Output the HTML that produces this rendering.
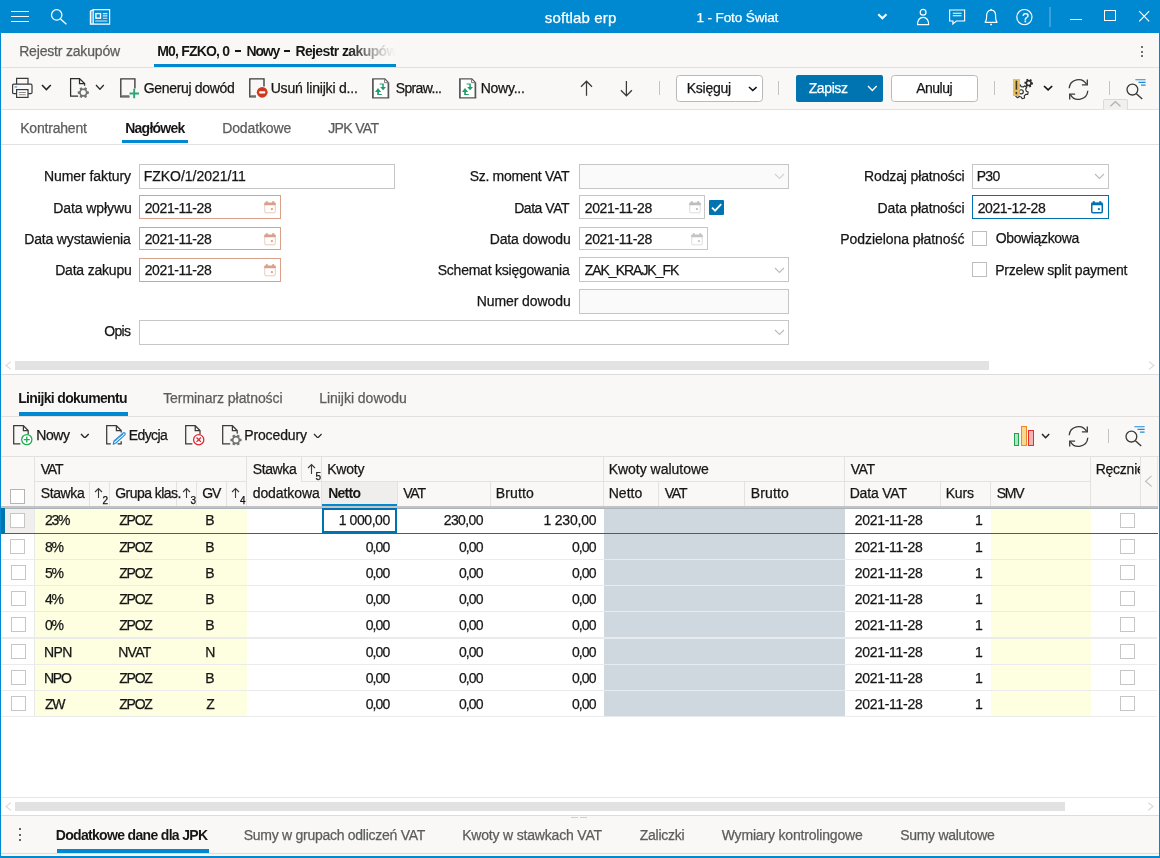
<!DOCTYPE html>
<html lang="pl"><head><meta charset="utf-8"><title>softlab erp</title>
<style>
html,body{margin:0;padding:0;background:#fff;}
body{width:1160px;height:858px;overflow:hidden;font-family:"Liberation Sans", sans-serif;}
#app{position:relative;width:1160px;height:858px;overflow:hidden;background:#fff;font-family:"Liberation Sans", sans-serif;font-size:14px;}
.a{position:absolute;display:block;}
.t{white-space:nowrap;}
#bg,#fg{position:absolute;left:0;top:0;width:1160px;height:858px;}
#fg{will-change:transform;}
</style></head><body><div id="app">
<div id="bg">
<div class="a" style="left:0px;top:0px;width:1160px;height:33.4px;background:#0089d0;"></div>
<div class="a" style="left:1px;top:33px;width:1158px;height:77px;background:#f9f8f7;"></div>
<div class="a" style="left:1px;top:67px;width:1158px;height:1px;background:#e3e1df;"></div>
<div class="a" style="left:1px;top:109px;width:1158px;height:1px;background:#e3e1df;"></div>
<div class="a" style="left:1px;top:144px;width:1158px;height:1px;background:#e3e1df;"></div>
<div class="a" style="left:11px;top:11px;width:18px;height:1.2px;background:#fff;"></div>
<div class="a" style="left:11px;top:16px;width:18px;height:1.2px;background:#fff;"></div>
<div class="a" style="left:11px;top:21px;width:18px;height:1.2px;background:#fff;"></div>
<svg class="a" style="left:49px;top:7px;" width="20" height="20" viewBox="0 0 20 20" fill="none"><circle cx="7.7" cy="7.9" r="5.2" stroke="#fff" stroke-width="1.25"/><path d="M11.5 11.9 L17.4 17.3" stroke="#fff" stroke-width="1.3"/></svg>
<svg class="a" style="left:89px;top:8px;" width="23" height="18" viewBox="0 0 23 18" fill="none"><path d="M4.2 1.7 H20.6 V16.2 H1.4 V3.2 L4.2 1.7 V16.2" stroke="#fff" stroke-width="1.2"/><path d="M2.8 3 V16" stroke="#fff" stroke-width="0.9" stroke-opacity=".7"/><rect x="6.9" y="5.6" width="4.6" height="4.6" stroke="#fff" stroke-width="1.4"/><path d="M13.8 5.6 H18.4 M13.8 7.9 H18.4 M13.8 10.2 H18.4 M6.2 13 H18.4" stroke="#fff" stroke-width="1.1" stroke-opacity=".85"/></svg>
<svg class="a" style="left:876px;top:12px;" width="13" height="9" viewBox="0 0 13 9" fill="none"><path d="M2.3 2.2 L6.4 6.3 L10.5 2.2" stroke="#fff" stroke-width="2"/></svg>
<svg class="a" style="left:915px;top:7px;" width="16" height="20" viewBox="0 0 16 20" fill="none"><circle cx="8.1" cy="5.3" r="2.9" stroke="#fff" stroke-width="1.2"/><path d="M2.5 17.6 C2.7 12.8 5 10.4 8.1 10.4 C11.2 10.4 13.5 12.8 13.7 17.6 Z" stroke="#fff" stroke-width="1.2" stroke-linejoin="round"/></svg>
<svg class="a" style="left:947px;top:7px;" width="20" height="20" viewBox="0 0 20 20" fill="none"><path d="M2.6 3 H17.6 V14 H9.3 L5.9 17 V14 H2.6 Z" stroke="#fff" stroke-width="1.2" stroke-linejoin="miter"/><path d="M5.8 6.2 H14.5 M5.8 8.7 H14.5" stroke="#fff" stroke-width="1.1"/></svg>
<svg class="a" style="left:983px;top:7px;" width="16" height="20" viewBox="0 0 16 20" fill="none"><path d="M2.3 15.4 H13.9 V14.7 C12.5 13.6 12.6 12 12.6 8.6 C12.6 5 10.6 3.2 8.1 3.2 C5.6 3.2 3.6 5 3.6 8.6 C3.6 12 3.7 13.6 2.3 14.7 Z" stroke="#fff" stroke-width="1.2" stroke-linejoin="round"/><path d="M7.2 17.5 H9" stroke="#fff" stroke-width="1.3"/><circle cx="8.1" cy="2.5" r="0.8" fill="#fff"/></svg>
<svg class="a" style="left:1014px;top:7px;" width="21" height="21" viewBox="0 0 21 21" fill="none"><circle cx="10.4" cy="10.1" r="7.6" stroke="#fff" stroke-width="1.15"/></svg>
<div class="a" style="left:1049px;top:7px;width:2px;height:20px;background:#3aa0db;"></div>
<div class="a" style="left:1070px;top:18.7px;width:12px;height:1.2px;background:#fff;"></div>
<div class="a" style="left:1104px;top:10px;width:12px;height:11.2px;border:1.3px solid #fff;box-sizing:border-box;"></div>
<svg class="a" style="left:1137px;top:9px;" width="14" height="14" viewBox="0 0 14 14" fill="none"><path d="M2.2 2.2 L12.2 12.3 M12.2 2.2 L2.2 12.3" stroke="#fff" stroke-width="1.15"/></svg>
<div class="a" style="left:234.5px;top:50.4px;width:6px;height:1.6px;background:#161616;"></div>
<div class="a" style="left:283.8px;top:50.4px;width:6px;height:1.6px;background:#161616;"></div>
<div class="a" style="left:154px;top:64px;width:242px;height:3px;background:#0089d0;"></div>
<div class="a" style="left:659px;top:81px;width:1px;height:14px;background:#c4c4c4;"></div>
<div class="a" style="left:676px;top:75px;width:86.5px;height:27px;background:#fff;border:1px solid #b9b9b9;box-sizing:border-box;border-radius:3.5px;"></div>
<div class="a" style="left:778px;top:81px;width:1px;height:14px;background:#c4c4c4;"></div>
<div class="a" style="left:796px;top:75px;width:87px;height:27px;background:#0073b1;border-radius:2px;"></div>
<div class="a" style="left:891px;top:75px;width:87px;height:27px;background:#fff;border:1px solid #b9b9b9;box-sizing:border-box;border-radius:3.5px;"></div>
<div class="a" style="left:994px;top:81px;width:1px;height:14px;background:#c4c4c4;"></div>
<div class="a" style="left:1109px;top:81px;width:1px;height:14px;background:#c4c4c4;"></div>
<div class="a" style="left:1102.5px;top:99px;width:25px;height:11px;background:#f1f0ef;border:1px solid #dcdad8;box-sizing:border-box;border-radius:2px;border-bottom:none;"></div>
<svg class="a" style="left:11px;top:77px;" width="22" height="22" viewBox="0 0 22 22" fill="none"><path d="M5.6 7.2 V1.4 H17 V7.2" stroke="#3a3a3a" stroke-width="1.2"/><path d="M5.6 16.6 H2.8 Q1.6 16.6 1.6 15.4 V8.4 Q1.6 7.2 2.8 7.2 H19.8 Q21 7.2 21 8.4 V15.4 Q21 16.6 19.8 16.6 H17" stroke="#3a3a3a" stroke-width="1.2"/><rect x="5.6" y="12.6" width="11.4" height="7.8" stroke="#3a3a3a" stroke-width="1.2" fill="#fff"/><path d="M7.8 15.5 H14.8 M7.8 17.7 H14.8" stroke="#8a8a8a" stroke-width="1"/><rect x="3.6" y="9.4" width="2.6" height="1.1" fill="#2b8fd8"/></svg>
<svg class="a" style="left:41.2px;top:84.3px;" width="10.8" height="6.6" viewBox="0 0 10.8 6.6" fill="none"><path d="M1 1 L5.4 5.6 L9.8 1" stroke="#222" stroke-width="1.5" stroke-linejoin="miter"/></svg>
<svg class="a" style="left:69px;top:77px;" width="24" height="24" viewBox="0 0 24 24" fill="none"><path d="M9.1 19.2 H1.6 V1.5 H10.5 L15.6 6.6 V8.7 M10.5 1.5 V6.6 H15.6" stroke="#2b2b2b" stroke-width="1.25"/><path d="M18.30 14.25 L19.89 14.47 L19.89 16.73 L18.30 16.95 L17.46 18.39 L18.07 19.88 L16.12 21.00 L15.13 19.73 L13.47 19.73 L12.48 21.00 L10.53 19.88 L11.14 18.39 L10.30 16.95 L8.71 16.73 L8.71 14.47 L10.30 14.25 L11.14 12.81 L10.53 11.32 L12.48 10.20 L13.47 11.47 L15.13 11.47 L16.12 10.20 L18.07 11.32 L17.46 12.81 Z" fill="#6f7472"/><circle cx="14.3" cy="15.6" r="2.50" fill="#faf9f8"/></svg>
<svg class="a" style="left:95.1px;top:84.2px;" width="9.8" height="6.3" viewBox="0 0 9.8 6.3" fill="none"><path d="M1 1 L4.9 5.3 L8.8 1" stroke="#2b2b2b" stroke-width="1.3" stroke-linejoin="miter"/></svg>
<svg class="a" style="left:119.6px;top:77.6px;" width="21" height="22" viewBox="0 0 21 22" fill="none"><path d="M9.6 18.9 H0.8 V0.8 H14.9 V10.6" stroke="#3a3a3a" stroke-width="1.35"/><path d="M0.8 17.6 H9.4" stroke="#8a8a8a" stroke-width="1.1"/><path d="M14.2 10.7 V20.2 M9.5 15.5 H19" stroke="#2aa775" stroke-width="1.9"/></svg>
<svg class="a" style="left:249.1px;top:77.6px;" width="20" height="22" viewBox="0 0 20 22" fill="none"><path d="M7 18.9 H0.8 V0.8 H15 V8.6" stroke="#3a3a3a" stroke-width="1.35"/><path d="M0.8 17.6 H7" stroke="#8a8a8a" stroke-width="1.1"/><circle cx="13.2" cy="14.3" r="5.4" fill="#cf3a1f"/><rect x="10.2" y="13.2" width="6" height="2.2" rx="0.6" fill="#fff"/></svg>
<svg class="a" style="left:372px;top:78px;" width="19" height="22" viewBox="0 0 19 22" fill="none"><path d="M0.9 0.7 H12.6 L16.6 4.7 V20 H0.9 Z" fill="#fff"/><path d="M0.9 1 V20 M16.4 4.6 V20" stroke="#555" stroke-width="1.7"/><path d="M0.1 0.8 H12.8 L16.6 4.6 M0.1 19.9 H17.2" stroke="#555" stroke-width="1.2"/><path d="M12.6 0.8 V4.7 H16.4" stroke="#777" stroke-width="1"/><path d="M7.6 5.6 H11.8 V9 H14 L11.1 12.2 L8.1 9 H10.3 V6.5 H7.6 Z" fill="#1f9e6a"/><path d="M6 10 L9.1 13.9 H6.9 V16 H9.8 V16.9 H5.2 V13.9 H3 Z" fill="#1f9e6a"/></svg>
<svg class="a" style="left:458.7px;top:78px;" width="19" height="22" viewBox="0 0 19 22" fill="none"><path d="M0.9 0.7 H12.6 L16.6 4.7 V20 H0.9 Z" fill="#fff"/><path d="M0.9 1 V20 M16.4 4.6 V20" stroke="#555" stroke-width="1.7"/><path d="M0.1 0.8 H12.8 L16.6 4.6 M0.1 19.9 H17.2" stroke="#555" stroke-width="1.2"/><path d="M12.6 0.8 V4.7 H16.4" stroke="#777" stroke-width="1"/><path d="M7.6 5.6 H11.8 V9 H14 L11.1 12.2 L8.1 9 H10.3 V6.5 H7.6 Z" fill="#1f9e6a"/><path d="M6 10 L9.1 13.9 H6.9 V16 H9.8 V16.9 H5.2 V13.9 H3 Z" fill="#1f9e6a"/></svg>
<svg class="a" style="left:579px;top:79px;" width="15" height="19" viewBox="0 0 15 19" fill="none"><path d="M7.5 16.8 V2.2 M2 7.8 L7.5 2.2 L13 7.8" stroke="#3a3a3a" stroke-width="1.25"/></svg>
<svg class="a" style="left:619px;top:79px;" width="15" height="19" viewBox="0 0 15 19" fill="none"><path d="M7.4 2.1 V16.7 M1.9 11.2 L7.4 16.8 L12.9 11.2" stroke="#3a3a3a" stroke-width="1.25"/></svg>
<svg class="a" style="left:747.5px;top:86px;" width="9.6" height="5.5" viewBox="0 0 9.6 5.5" fill="none"><path d="M1 1 L4.8 4.5 L8.6 1" stroke="#111" stroke-width="1.6" stroke-linejoin="miter"/></svg>
<svg class="a" style="left:867px;top:85.4px;" width="10.7" height="6.5" viewBox="0 0 10.7 6.5" fill="none"><path d="M1 1 L5.35 5.5 L9.7 1" stroke="#fff" stroke-width="1.4" stroke-linejoin="miter"/></svg>
<svg class="a" style="left:1011px;top:76px;" width="26" height="26" viewBox="0 0 26 26" fill="none"><path d="M15.35 15.21 L17.20 15.95 L16.71 18.38 L14.71 18.35 L13.28 19.96 L13.57 21.94 L11.22 22.73 L10.25 20.98 L8.14 20.55 L6.57 21.78 L4.71 20.14 L5.74 18.43 L5.05 16.39 L3.20 15.65 L3.69 13.22 L5.69 13.25 L7.12 11.64 L6.83 9.66 L9.18 8.87 L10.15 10.62 L12.26 11.05 L13.83 9.82 L15.69 11.46 L14.66 13.17 Z" fill="#fbfaf9" stroke="#2e2e2e" stroke-width="1.15" stroke-linejoin="round"/><circle cx="10.2" cy="15.8" r="2.1" stroke="#2e2e2e" stroke-width="1.15"/><path d="M20.87 6.37 L22.08 6.67 L21.90 8.40 L20.67 8.44 L19.92 9.49 L20.27 10.67 L18.68 11.39 L18.02 10.34 L16.74 10.21 L15.89 11.11 L14.48 10.09 L15.05 9.00 L14.53 7.83 L13.32 7.53 L13.50 5.80 L14.73 5.76 L15.48 4.71 L15.13 3.53 L16.72 2.81 L17.38 3.86 L18.66 3.99 L19.51 3.09 L20.92 4.11 L20.35 5.20 Z" fill="#2e2e2e"/><circle cx="17.7" cy="7.1" r="1.55" fill="#faf9f8"/><rect x="1.95" y="3" width="6.95" height="17" fill="#e6bd5c" fill-opacity=".95"/><rect x="4.6" y="4.7" width="1.6" height="9" fill="#3a382f"/><rect x="4.6" y="15.9" width="1.6" height="2.3" fill="#3a382f"/></svg>
<svg class="a" style="left:1042.5px;top:85.4px;" width="10.2" height="5.9" viewBox="0 0 10.2 5.9" fill="none"><path d="M1 1 L5.1 4.9 L9.2 1" stroke="#111" stroke-width="1.6" stroke-linejoin="miter"/></svg>
<svg class="a" style="left:1067.4px;top:77.6px;" width="23" height="23" viewBox="0 0 23 23" fill="none"><path d="M2.2 10.2 A9.3 9.3 0 0 1 19.6 6.4" stroke="#3a3a3a" stroke-width="1.3"/><path d="M20.8 12.8 A9.3 9.3 0 0 1 3.4 16.6" stroke="#3a3a3a" stroke-width="1.3"/><path d="M20.3 1.4 V6.8 H14.9" stroke="#3a3a3a" stroke-width="1.3"/><path d="M2.7 21.6 V16.2 H8.1" stroke="#3a3a3a" stroke-width="1.3"/></svg>
<svg class="a" style="left:1125.4px;top:77.6px;" width="22" height="22" viewBox="0 0 22 22" fill="none"><circle cx="7.4" cy="11.6" r="5.4" stroke="#3a3a3a" stroke-width="1.3"/><path d="M11.4 15.7 L17.2 21" stroke="#3a3a3a" stroke-width="1.4"/><path d="M10.4 1.7 H20.6 M13.5 4.4 H20.6 M16 7.1 H20.6" stroke="#1c8ad6" stroke-width="1.15"/></svg>
<svg class="a" style="left:1109px;top:100px;" width="13" height="8" viewBox="0 0 13 8" fill="none"><path d="M1.4 6.2 L6.4 1.7 L11.4 6.2" stroke="#b3b3b3" stroke-width="1.3"/></svg>
<div class="a" style="left:1140.6px;top:46.0px;width:2px;height:2px;background:#444;border-radius:1px;"></div>
<div class="a" style="left:1140.6px;top:50.6px;width:2px;height:2px;background:#444;border-radius:1px;"></div>
<div class="a" style="left:1140.6px;top:55.2px;width:2px;height:2px;background:#444;border-radius:1px;"></div>
<div class="a" style="left:122px;top:140.2px;width:66px;height:3px;background:#0089d0;"></div>
<div class="a" style="left:139px;top:164px;width:256px;height:25px;background:#fff;border:1px solid #c6c6c6;box-sizing:border-box;"></div>
<div class="a" style="left:139px;top:195px;width:142px;height:24px;background:#fff;border:1px solid #d9a08a;box-sizing:border-box;"></div>
<svg class="a" style="left:264px;top:201px;" width="12" height="13" viewBox="0 0 12 13" fill="none"><rect x="1.8" y="0.2" width="2" height="2.4" fill="#d9a08a"/><rect x="8.2" y="0.2" width="2" height="2.4" fill="#d9a08a"/><rect x="0.2" y="1.6" width="11.6" height="2.7" rx="0.8" fill="#d9a08a"/><rect x="0.75" y="2.6" width="10.5" height="9.2" rx="1" stroke="#d9a08a" stroke-width="1" stroke-opacity=".55"/><circle cx="7.9" cy="8.1" r="1.15" fill="#d9a08a"/></svg>
<div class="a" style="left:139px;top:227px;width:142px;height:23px;background:#fff;border:1px solid #d9a08a;box-sizing:border-box;"></div>
<svg class="a" style="left:264px;top:233px;" width="12" height="13" viewBox="0 0 12 13" fill="none"><rect x="1.8" y="0.2" width="2" height="2.4" fill="#d9a08a"/><rect x="8.2" y="0.2" width="2" height="2.4" fill="#d9a08a"/><rect x="0.2" y="1.6" width="11.6" height="2.7" rx="0.8" fill="#d9a08a"/><rect x="0.75" y="2.6" width="10.5" height="9.2" rx="1" stroke="#d9a08a" stroke-width="1" stroke-opacity=".55"/><circle cx="7.9" cy="8.1" r="1.15" fill="#d9a08a"/></svg>
<div class="a" style="left:139px;top:258px;width:142px;height:24px;background:#fff;border:1px solid #d9a08a;box-sizing:border-box;"></div>
<svg class="a" style="left:264px;top:264px;" width="12" height="13" viewBox="0 0 12 13" fill="none"><rect x="1.8" y="0.2" width="2" height="2.4" fill="#d9a08a"/><rect x="8.2" y="0.2" width="2" height="2.4" fill="#d9a08a"/><rect x="0.2" y="1.6" width="11.6" height="2.7" rx="0.8" fill="#d9a08a"/><rect x="0.75" y="2.6" width="10.5" height="9.2" rx="1" stroke="#d9a08a" stroke-width="1" stroke-opacity=".55"/><circle cx="7.9" cy="8.1" r="1.15" fill="#d9a08a"/></svg>
<div class="a" style="left:139px;top:320px;width:650px;height:25px;background:#fff;border:1px solid #c6c6c6;box-sizing:border-box;"></div>
<svg class="a" style="left:774px;top:329.2px;" width="11" height="6.4" viewBox="0 0 11 6.4" fill="none"><path d="M1 1 L5.5 5.4 L10 1" stroke="#bcbcbc" stroke-width="1.15" stroke-linejoin="miter"/></svg>
<div class="a" style="left:579px;top:164px;width:210px;height:25px;background:#fafafa;border:1px solid #c6c6c6;box-sizing:border-box;"></div>
<svg class="a" style="left:774px;top:173.2px;" width="11" height="6.4" viewBox="0 0 11 6.4" fill="none"><path d="M1 1 L5.5 5.4 L10 1" stroke="#d2d2d2" stroke-width="1.15" stroke-linejoin="miter"/></svg>
<div class="a" style="left:579px;top:195px;width:126px;height:24px;background:#fff;border:1px solid #c6c6c6;box-sizing:border-box;"></div>
<svg class="a" style="left:689px;top:201px;" width="12" height="13" viewBox="0 0 12 13" fill="none"><rect x="1.8" y="0.2" width="2" height="2.4" fill="#bdbdbd"/><rect x="8.2" y="0.2" width="2" height="2.4" fill="#bdbdbd"/><rect x="0.2" y="1.6" width="11.6" height="2.7" rx="0.8" fill="#bdbdbd"/><rect x="0.75" y="2.6" width="10.5" height="9.2" rx="1" stroke="#bdbdbd" stroke-width="1" stroke-opacity=".55"/><circle cx="7.9" cy="8.1" r="1.15" fill="#bdbdbd"/></svg>
<div class="a" style="left:709px;top:200px;width:15px;height:15px;background:#0073b1;border-radius:1px;"></div>
<svg class="a" style="left:709px;top:200px;" width="15" height="15" viewBox="0 0 15 15" fill="none"><path d="M3 7.6 L6.1 10.7 L12.2 4.2" stroke="#fff" stroke-width="1.7"/></svg>
<div class="a" style="left:579px;top:227px;width:129px;height:23px;background:#fff;border:1px solid #c6c6c6;box-sizing:border-box;"></div>
<svg class="a" style="left:691px;top:233px;" width="12" height="13" viewBox="0 0 12 13" fill="none"><rect x="1.8" y="0.2" width="2" height="2.4" fill="#c4c4c4"/><rect x="8.2" y="0.2" width="2" height="2.4" fill="#c4c4c4"/><rect x="0.2" y="1.6" width="11.6" height="2.7" rx="0.8" fill="#c4c4c4"/><rect x="0.75" y="2.6" width="10.5" height="9.2" rx="1" stroke="#c4c4c4" stroke-width="1" stroke-opacity=".55"/><circle cx="7.9" cy="8.1" r="1.15" fill="#c4c4c4"/></svg>
<div class="a" style="left:579px;top:257px;width:210px;height:25px;background:#fff;border:1px solid #c6c6c6;box-sizing:border-box;"></div>
<svg class="a" style="left:774px;top:267.2px;" width="11" height="6.4" viewBox="0 0 11 6.4" fill="none"><path d="M1 1 L5.5 5.4 L10 1" stroke="#bcbcbc" stroke-width="1.15" stroke-linejoin="miter"/></svg>
<div class="a" style="left:579px;top:289px;width:210px;height:25px;background:#fafafa;border:1px solid #c6c6c6;box-sizing:border-box;"></div>
<div class="a" style="left:972px;top:164px;width:137px;height:25px;background:#fff;border:1px solid #c6c6c6;box-sizing:border-box;"></div>
<svg class="a" style="left:1093.5px;top:173.2px;" width="11" height="6.4" viewBox="0 0 11 6.4" fill="none"><path d="M1 1 L5.5 5.4 L10 1" stroke="#bcbcbc" stroke-width="1.15" stroke-linejoin="miter"/></svg>
<div class="a" style="left:972px;top:195px;width:137px;height:24px;background:#fff;border:1.3px solid #0072b0;box-sizing:border-box;"></div>
<svg class="a" style="left:1091px;top:201px;" width="12" height="13" viewBox="0 0 12 13" fill="none"><rect x="1.8" y="0.2" width="2" height="2.4" fill="#0072b0"/><rect x="8.2" y="0.2" width="2" height="2.4" fill="#0072b0"/><rect x="0.2" y="1.6" width="11.6" height="2.7" rx="0.8" fill="#0072b0"/><rect x="0.75" y="2.6" width="10.5" height="9.2" rx="1" stroke="#0072b0" stroke-width="1.5" stroke-opacity="1"/><circle cx="7.9" cy="8.1" r="1.15" fill="#0072b0"/></svg>
<div class="a" style="left:972px;top:231px;width:15px;height:15px;background:#fff;border:1px solid #bdbdbd;box-sizing:border-box;"></div>
<div class="a" style="left:972px;top:262px;width:15px;height:15px;background:#fff;border:1px solid #bdbdbd;box-sizing:border-box;"></div>
<div class="a" style="left:15px;top:361px;width:974px;height:9px;background:#e2e2e2;"></div>
<svg class="a" style="left:4px;top:359px;" width="8" height="13" viewBox="0 0 8 13" fill="none"><path d="M6.9 2.6 L2 6.5 L6.9 10.4" stroke="#d9d9d9" stroke-width="1.15"/></svg>
<svg class="a" style="left:1148px;top:359px;" width="8" height="13" viewBox="0 0 8 13" fill="none"><path d="M1.1 2.6 L6 6.5 L1.1 10.4" stroke="#d9d9d9" stroke-width="1.15"/></svg>
<div class="a" style="left:1px;top:374.4px;width:1158px;height:134.6px;background:#f9f8f7;"></div>
<div class="a" style="left:1px;top:373.6px;width:1158px;height:1px;background:#dedcda;"></div>
<div class="a" style="left:1px;top:416px;width:1158px;height:1px;background:#e3e1df;"></div>
<div class="a" style="left:19px;top:412px;width:109px;height:3.8px;background:#0089d0;"></div>
<div class="a" style="left:1px;top:456px;width:1158px;height:1px;background:#e3e1df;"></div>
<div class="a" style="left:1107.7px;top:429px;width:1px;height:14px;background:#c4c4c4;"></div>
<svg class="a" style="left:12.6px;top:424.7px;" width="22" height="22" viewBox="0 0 22 22" fill="none"><path d="M7.4 18.9 H0.7 V0.7 H10.399999999999999 L15.2 5.5 V9.4 M10.399999999999999 0.7 V5.5 H15.2" stroke="#3a3a3a" stroke-width="1.25" stroke-linejoin="miter"/><circle cx="13.8" cy="14.6" r="5.1" fill="#fff" stroke="#1faa53" stroke-width="1.25"/><path d="M13.8 11.6 V17.6 M10.8 14.6 H16.8" stroke="#1faa53" stroke-width="1.3"/></svg>
<svg class="a" style="left:79.6px;top:432.6px;" width="9.7" height="5.9" viewBox="0 0 9.7 5.9" fill="none"><path d="M1 1 L4.85 4.9 L8.7 1" stroke="#222" stroke-width="1.4" stroke-linejoin="miter"/></svg>
<svg class="a" style="left:105.8px;top:424.7px;" width="22" height="22" viewBox="0 0 22 22" fill="none"><path d="M4.8 18.9 H0.7 V0.7 H10.4 L15.2 5.5 V7.6 M10.4 0.7 V5.5 H15.2 M11.6 18.9 H15.2 V16.2" stroke="#3a3a3a" stroke-width="1.25"/><path d="M7.3 19.2 L8 16 L17.2 7.9 Q18.2 7.2 19 8.2 Q19.6 9.2 18.8 9.9 L9.9 18 Z" fill="#fff" stroke="#2b8fd8" stroke-width="1.2" stroke-linejoin="round"/><path d="M8.7 16.4 L17.6 8.6" stroke="#2b8fd8" stroke-width="1"/></svg>
<svg class="a" style="left:184.6px;top:424.7px;" width="22" height="22" viewBox="0 0 22 22" fill="none"><path d="M7.4 18.9 H0.7 V0.7 H10.2 L15.0 5.5 V9.4 M10.2 0.7 V5.5 H15.0" stroke="#3a3a3a" stroke-width="1.25" stroke-linejoin="miter"/><circle cx="13.7" cy="14.7" r="5.1" fill="#fff" stroke="#e0262e" stroke-width="1.3"/><path d="M11.5 12.5 L15.9 16.9 M15.9 12.5 L11.5 16.9" stroke="#e0262e" stroke-width="1.3"/></svg>
<svg class="a" style="left:221.5px;top:424.7px;" width="22" height="22" viewBox="0 0 22 22" fill="none"><path d="M8.2 18.9 H0.7 V0.7 H10.399999999999999 L15.2 5.5 V8.8 M10.399999999999999 0.7 V5.5 H15.2" stroke="#3a3a3a" stroke-width="1.25" stroke-linejoin="miter"/><path d="M18.00 13.65 L19.59 13.87 L19.59 16.13 L18.00 16.35 L17.16 17.79 L17.77 19.28 L15.82 20.40 L14.83 19.13 L13.17 19.13 L12.18 20.40 L10.23 19.28 L10.84 17.79 L10.00 16.35 L8.41 16.13 L8.41 13.87 L10.00 13.65 L10.84 12.21 L10.23 10.72 L12.18 9.60 L13.17 10.87 L14.83 10.87 L15.82 9.60 L17.77 10.72 L17.16 12.21 Z" fill="#6f7472"/><circle cx="14" cy="15" r="2.50" fill="#faf9f8"/></svg>
<svg class="a" style="left:312.8px;top:432.6px;" width="9.6" height="5.9" viewBox="0 0 9.6 5.9" fill="none"><path d="M1 1 L4.8 4.9 L8.6 1" stroke="#2b2b2b" stroke-width="1.3" stroke-linejoin="miter"/></svg>
<div class="a" style="left:1013.7px;top:433px;width:5.8px;height:12.8px;background:#b9e0c0;border:1.4px solid #1ea44c;box-sizing:border-box;"></div>
<div class="a" style="left:1021px;top:426px;width:5.8px;height:19.8px;background:#f9d88e;border:1.4px solid #ee8a2a;box-sizing:border-box;"></div>
<div class="a" style="left:1028.2px;top:430px;width:5.7px;height:15.8px;background:#f5b5b5;border:1.4px solid #e22f2f;box-sizing:border-box;"></div>
<svg class="a" style="left:1040.5px;top:433.2px;" width="9.2" height="5.7" viewBox="0 0 9.2 5.7" fill="none"><path d="M1 1 L4.6 4.7 L8.2 1" stroke="#222" stroke-width="1.5" stroke-linejoin="miter"/></svg>
<svg class="a" style="left:1066.9px;top:424.7px;" width="23" height="23" viewBox="0 0 23 23" fill="none"><path d="M2.2 10.2 A9.3 9.3 0 0 1 19.6 6.4" stroke="#3a3a3a" stroke-width="1.3"/><path d="M20.8 12.8 A9.3 9.3 0 0 1 3.4 16.6" stroke="#3a3a3a" stroke-width="1.3"/><path d="M20.3 1.4 V6.8 H14.9" stroke="#3a3a3a" stroke-width="1.3"/><path d="M2.7 21.6 V16.2 H8.1" stroke="#3a3a3a" stroke-width="1.3"/></svg>
<svg class="a" style="left:1123.8px;top:424.6px;" width="22" height="22" viewBox="0 0 22 22" fill="none"><circle cx="7.4" cy="11.6" r="5.4" stroke="#3a3a3a" stroke-width="1.3"/><path d="M11.4 15.7 L17.2 21" stroke="#3a3a3a" stroke-width="1.4"/><path d="M10.4 1.7 H20.6 M13.5 4.4 H20.6 M16 7.1 H20.6" stroke="#1c8ad6" stroke-width="1.15"/></svg>
<div class="a" style="left:322px;top:482px;width:75px;height:24px;background:#efeeed;"></div>
<div class="a" style="left:322px;top:504px;width:75px;height:2px;background:#0089d0;"></div>
<div class="a" style="left:35px;top:481px;width:211px;height:1px;background:#e4e2e0;"></div>
<div class="a" style="left:322px;top:481px;width:768px;height:1px;background:#e4e2e0;"></div>
<div class="a" style="left:34px;top:457px;width:1px;height:49px;background:#e4e2e0;"></div>
<div class="a" style="left:246px;top:457px;width:1px;height:49px;background:#e4e2e0;"></div>
<div class="a" style="left:321px;top:457px;width:1px;height:49px;background:#e4e2e0;"></div>
<div class="a" style="left:603px;top:457px;width:1px;height:49px;background:#e4e2e0;"></div>
<div class="a" style="left:844px;top:457px;width:1px;height:49px;background:#e4e2e0;"></div>
<div class="a" style="left:1090px;top:457px;width:1px;height:49px;background:#e4e2e0;"></div>
<div class="a" style="left:1140px;top:457px;width:1px;height:49px;background:#e4e2e0;"></div>
<div class="a" style="left:89px;top:482px;width:1px;height:24px;background:#e4e2e0;"></div>
<div class="a" style="left:109px;top:482px;width:1px;height:24px;background:#e4e2e0;"></div>
<div class="a" style="left:176px;top:482px;width:1px;height:24px;background:#e4e2e0;"></div>
<div class="a" style="left:196px;top:482px;width:1px;height:24px;background:#e4e2e0;"></div>
<div class="a" style="left:226px;top:482px;width:1px;height:24px;background:#e4e2e0;"></div>
<div class="a" style="left:397px;top:482px;width:1px;height:24px;background:#e4e2e0;"></div>
<div class="a" style="left:490px;top:482px;width:1px;height:24px;background:#e4e2e0;"></div>
<div class="a" style="left:658px;top:482px;width:1px;height:24px;background:#e4e2e0;"></div>
<div class="a" style="left:744px;top:482px;width:1px;height:24px;background:#e4e2e0;"></div>
<div class="a" style="left:940px;top:482px;width:1px;height:24px;background:#e4e2e0;"></div>
<div class="a" style="left:990px;top:482px;width:1px;height:24px;background:#e4e2e0;"></div>
<div class="a" style="left:301px;top:457px;width:1px;height:24px;background:#e4e2e0;"></div>
<div class="a" style="left:301px;top:481px;width:20px;height:1px;background:#e4e2e0;"></div>
<div class="a" style="left:10px;top:489px;width:15px;height:15px;background:#fff;border:1px solid #b4b4b4;box-sizing:border-box;"></div>
<svg class="a" style="left:93.5px;top:487px;" width="9" height="12" viewBox="0 0 9 12" fill="none"><path d="M4.5 11 V1.5 M1 5 L4.5 1.5 L8 5" stroke="#3a3a3a" stroke-width="1.1"/></svg>
<svg class="a" style="left:181.5px;top:487px;" width="9" height="12" viewBox="0 0 9 12" fill="none"><path d="M4.5 11 V1.5 M1 5 L4.5 1.5 L8 5" stroke="#3a3a3a" stroke-width="1.1"/></svg>
<svg class="a" style="left:231px;top:487px;" width="9" height="12" viewBox="0 0 9 12" fill="none"><path d="M4.5 11 V1.5 M1 5 L4.5 1.5 L8 5" stroke="#3a3a3a" stroke-width="1.1"/></svg>
<svg class="a" style="left:306.5px;top:462.5px;" width="9" height="12" viewBox="0 0 9 12" fill="none"><path d="M4.5 11 V1.5 M1 5 L4.5 1.5 L8 5" stroke="#3a3a3a" stroke-width="1.1"/></svg>
<svg class="a" style="left:1143px;top:474px;" width="10" height="15" viewBox="0 0 10 15" fill="none"><path d="M8.6 1.9 L2.6 7.2 L8.6 12.5" stroke="#c2c2c2" stroke-width="1.2"/></svg>
<div class="a" style="left:1157px;top:457px;width:1px;height:340px;background:#e8e8e8;"></div>
<div class="a" style="left:1px;top:506px;width:1157px;height:291px;background:#fff;"></div>
<div class="a" style="left:35px;top:509px;width:211.6px;height:24px;background:#fefee0;"></div>
<div class="a" style="left:604px;top:509px;width:241px;height:24px;background:#cfd8df;"></div>
<div class="a" style="left:991px;top:509px;width:100px;height:24px;background:#fefee0;"></div>
<div class="a" style="left:1px;top:508px;width:33px;height:25px;background:#f0efee;"></div>
<div class="a" style="left:10px;top:513px;width:15px;height:15px;background:#fff;border:1px solid #c6c6c6;box-sizing:border-box;"></div>
<div class="a" style="left:1120px;top:513px;width:15px;height:15px;background:#fff;border:1px solid #c6c6c6;box-sizing:border-box;"></div>
<div class="a" style="left:35px;top:534px;width:211.6px;height:25px;background:#fefee0;"></div>
<div class="a" style="left:604px;top:534px;width:241px;height:25px;background:#cfd8df;"></div>
<div class="a" style="left:991px;top:534px;width:100px;height:25px;background:#fefee0;"></div>
<div class="a" style="left:1px;top:559px;width:1156px;height:1px;background:#ebebeb;"></div>
<div class="a" style="left:604px;top:559px;width:241px;height:1px;background:#e6ecf0;"></div>
<div class="a" style="left:10px;top:539px;width:15px;height:15px;background:#fff;border:1px solid #c6c6c6;box-sizing:border-box;"></div>
<div class="a" style="left:1120px;top:539px;width:15px;height:15px;background:#fff;border:1px solid #c6c6c6;box-sizing:border-box;"></div>
<div class="a" style="left:35px;top:560px;width:211.6px;height:25px;background:#fefee0;"></div>
<div class="a" style="left:604px;top:560px;width:241px;height:25px;background:#cfd8df;"></div>
<div class="a" style="left:991px;top:560px;width:100px;height:25px;background:#fefee0;"></div>
<div class="a" style="left:1px;top:585px;width:1156px;height:1px;background:#ebebeb;"></div>
<div class="a" style="left:604px;top:585px;width:241px;height:1px;background:#e6ecf0;"></div>
<div class="a" style="left:11px;top:565px;width:15px;height:15px;background:#fff;border:1px solid #c6c6c6;box-sizing:border-box;"></div>
<div class="a" style="left:1120px;top:565px;width:15px;height:15px;background:#fff;border:1px solid #c6c6c6;box-sizing:border-box;"></div>
<div class="a" style="left:35px;top:586px;width:211.6px;height:25px;background:#fefee0;"></div>
<div class="a" style="left:604px;top:586px;width:241px;height:25px;background:#cfd8df;"></div>
<div class="a" style="left:991px;top:586px;width:100px;height:25px;background:#fefee0;"></div>
<div class="a" style="left:1px;top:611px;width:1156px;height:1px;background:#ebebeb;"></div>
<div class="a" style="left:604px;top:611px;width:241px;height:1px;background:#e6ecf0;"></div>
<div class="a" style="left:11px;top:591px;width:15px;height:15px;background:#fff;border:1px solid #c6c6c6;box-sizing:border-box;"></div>
<div class="a" style="left:1120px;top:591px;width:15px;height:15px;background:#fff;border:1px solid #c6c6c6;box-sizing:border-box;"></div>
<div class="a" style="left:35px;top:612px;width:211.6px;height:25px;background:#fefee0;"></div>
<div class="a" style="left:604px;top:612px;width:241px;height:25px;background:#cfd8df;"></div>
<div class="a" style="left:991px;top:612px;width:100px;height:25px;background:#fefee0;"></div>
<div class="a" style="left:1px;top:637px;width:1156px;height:2px;background:#ebebeb;"></div>
<div class="a" style="left:604px;top:637px;width:241px;height:2px;background:#e6ecf0;"></div>
<div class="a" style="left:11px;top:617px;width:15px;height:15px;background:#fff;border:1px solid #c6c6c6;box-sizing:border-box;"></div>
<div class="a" style="left:1120px;top:617px;width:15px;height:15px;background:#fff;border:1px solid #c6c6c6;box-sizing:border-box;"></div>
<div class="a" style="left:35px;top:639px;width:211.6px;height:25px;background:#fefee0;"></div>
<div class="a" style="left:604px;top:639px;width:241px;height:25px;background:#cfd8df;"></div>
<div class="a" style="left:991px;top:639px;width:100px;height:25px;background:#fefee0;"></div>
<div class="a" style="left:1px;top:664px;width:1156px;height:1px;background:#ebebeb;"></div>
<div class="a" style="left:604px;top:664px;width:241px;height:1px;background:#e6ecf0;"></div>
<div class="a" style="left:11px;top:644px;width:15px;height:15px;background:#fff;border:1px solid #c6c6c6;box-sizing:border-box;"></div>
<div class="a" style="left:1120px;top:644px;width:15px;height:15px;background:#fff;border:1px solid #c6c6c6;box-sizing:border-box;"></div>
<div class="a" style="left:35px;top:665px;width:211.6px;height:25px;background:#fefee0;"></div>
<div class="a" style="left:604px;top:665px;width:241px;height:25px;background:#cfd8df;"></div>
<div class="a" style="left:991px;top:665px;width:100px;height:25px;background:#fefee0;"></div>
<div class="a" style="left:1px;top:690px;width:1156px;height:1px;background:#ebebeb;"></div>
<div class="a" style="left:604px;top:690px;width:241px;height:1px;background:#e6ecf0;"></div>
<div class="a" style="left:11px;top:670px;width:15px;height:15px;background:#fff;border:1px solid #c6c6c6;box-sizing:border-box;"></div>
<div class="a" style="left:1120px;top:670px;width:15px;height:15px;background:#fff;border:1px solid #c6c6c6;box-sizing:border-box;"></div>
<div class="a" style="left:35px;top:691px;width:211.6px;height:25px;background:#fefee0;"></div>
<div class="a" style="left:604px;top:691px;width:241px;height:25px;background:#cfd8df;"></div>
<div class="a" style="left:991px;top:691px;width:100px;height:25px;background:#fefee0;"></div>
<div class="a" style="left:1px;top:716px;width:1156px;height:1px;background:#ebebeb;"></div>
<div class="a" style="left:604px;top:716px;width:241px;height:1px;background:#e6ecf0;"></div>
<div class="a" style="left:11px;top:696px;width:15px;height:15px;background:#fff;border:1px solid #c6c6c6;box-sizing:border-box;"></div>
<div class="a" style="left:1120px;top:696px;width:15px;height:15px;background:#fff;border:1px solid #c6c6c6;box-sizing:border-box;"></div>
<div class="a" style="left:34px;top:508px;width:1px;height:208px;background:#e9e9e9;"></div>
<div class="a" style="left:1px;top:506px;width:1157px;height:2px;background:#c3c3c3;"></div>
<div class="a" style="left:1px;top:508px;width:1157px;height:0.45px;background:#a9b3ba;"></div>
<div class="a" style="left:1px;top:532.5px;width:1157px;height:0.5px;background:#b5b5b5;"></div>
<div class="a" style="left:1px;top:533px;width:1157px;height:1px;background:#555a5e;"></div>
<div class="a" style="left:1px;top:508.3px;width:3.7px;height:24.7px;background:#0073b1;"></div>
<div class="a" style="left:322px;top:508px;width:75px;height:25px;background:#fff;border:2px solid #0072b0;box-sizing:border-box;"></div>
<div class="a" style="left:1px;top:797px;width:1158px;height:1px;background:#e6e6e6;"></div>
<div class="a" style="left:15px;top:802px;width:1050px;height:9px;background:#e2e2e2;"></div>
<svg class="a" style="left:4px;top:800px;" width="8" height="13" viewBox="0 0 8 13" fill="none"><path d="M6.9 2.6 L2 6.5 L6.9 10.4" stroke="#d9d9d9" stroke-width="1.15"/></svg>
<svg class="a" style="left:1147px;top:800px;" width="8" height="13" viewBox="0 0 8 13" fill="none"><path d="M1.1 2.6 L6 6.5 L1.1 10.4" stroke="#d9d9d9" stroke-width="1.15"/></svg>
<div class="a" style="left:1px;top:816px;width:1158px;height:40px;background:#f9f8f7;"></div>
<div class="a" style="left:1px;top:815px;width:1158px;height:1px;background:#dedcda;"></div>
<div class="a" style="left:1px;top:853px;width:1158px;height:1px;background:#dedcda;"></div>
<div class="a" style="left:57px;top:849px;width:152px;height:4px;background:#0089d0;"></div>
<div class="a" style="left:19px;top:828.3px;width:2.1px;height:2.1px;background:#333;border-radius:1.05px;"></div>
<div class="a" style="left:19px;top:833.5999999999999px;width:2.1px;height:2.1px;background:#333;border-radius:1.05px;"></div>
<div class="a" style="left:19px;top:838.9px;width:2.1px;height:2.1px;background:#333;border-radius:1.05px;"></div>
<div class="a" style="left:571px;top:817px;width:7px;height:1px;background:#cfcfcf;"></div>
<div class="a" style="left:580px;top:817px;width:7px;height:1px;background:#cfcfcf;"></div>
<div class="a" style="left:0px;top:33px;width:1px;height:825px;background:#0089d0;"></div>
<div class="a" style="left:1158.7px;top:33px;width:1.3px;height:825px;background:#0089d0;"></div>
<div class="a" style="left:0px;top:856.4px;width:1160px;height:1.6px;background:#0089d0;"></div>
</div>
<div id="fg">
<span class="a t" style="left:544.80px;top:9.00px;font-size:15px;line-height:17px;color:#fff;-webkit-text-stroke:0.25px;letter-spacing:0.140px;">softlab erp</span>
<span class="a t" style="left:696.40px;top:10.00px;font-size:13.5px;line-height:15px;color:#fff;-webkit-text-stroke:0.25px;letter-spacing:-0.102px;">1 - Foto Świat</span>
<span class="a t" style="left:1022.30px;top:10.60px;font-size:12px;line-height:14px;color:#fff;-webkit-text-stroke:0.25px;">?</span>
<span class="a t" style="left:19.20px;top:43.00px;font-size:14px;line-height:16px;color:#5c5c5c;-webkit-text-stroke:0.25px;letter-spacing:-0.184px;">Rejestr zakupów</span>
<span class="a t" style="left:157.20px;top:43.00px;font-size:14px;line-height:16px;color:#161616;font-weight:700;letter-spacing:-0.811px;">M0, FZKO, 0</span>
<span class="a t" style="left:246.60px;top:43.00px;font-size:14px;line-height:16px;color:#161616;font-weight:700;letter-spacing:-1.200px;">Nowy</span>
<span class="a t" style="left:295.40px;top:43.00px;font-size:14px;line-height:16px;color:#161616;font-weight:700;letter-spacing:-0.604px;width:100.60px;overflow:hidden;">Rejestr zakupów</span>
<div class="a" style="left:348px;top:40px;width:48px;height:23px;background:linear-gradient(90deg,rgba(249,248,247,0),rgba(249,248,247,.3) 28%,rgba(249,248,247,.62) 52%,rgba(249,248,247,.86) 78%,rgba(249,248,247,1) 100%);"></div>
<span class="a t" style="left:143.70px;top:80.00px;font-size:14px;line-height:16px;color:#161616;-webkit-text-stroke:0.25px;letter-spacing:-0.322px;">Generuj dowód</span>
<span class="a t" style="left:270.70px;top:80.00px;font-size:14px;line-height:16px;color:#161616;-webkit-text-stroke:0.25px;letter-spacing:-0.192px;">Usuń linijki d...</span>
<span class="a t" style="left:395.70px;top:80.00px;font-size:14px;line-height:16px;color:#161616;-webkit-text-stroke:0.25px;letter-spacing:-0.627px;">Spraw...</span>
<span class="a t" style="left:480.70px;top:80.00px;font-size:14px;line-height:16px;color:#161616;-webkit-text-stroke:0.25px;letter-spacing:-0.241px;">Nowy...</span>
<span class="a t" style="left:686.70px;top:80.00px;font-size:14px;line-height:16px;color:#161616;-webkit-text-stroke:0.25px;letter-spacing:-0.251px;">Księguj</span>
<span class="a t" style="left:808.70px;top:80.00px;font-size:14px;line-height:16px;color:#fff;-webkit-text-stroke:0.25px;letter-spacing:-0.387px;">Zapisz</span>
<span class="a t" style="left:916.20px;top:80.00px;font-size:14px;line-height:16px;color:#161616;-webkit-text-stroke:0.25px;letter-spacing:-0.501px;">Anuluj</span>
<span class="a t" style="left:20.20px;top:120.00px;font-size:14px;line-height:16px;color:#5c5c5c;-webkit-text-stroke:0.25px;letter-spacing:-0.201px;">Kontrahent</span>
<span class="a t" style="left:125.20px;top:120.00px;font-size:14px;line-height:16px;color:#161616;font-weight:700;letter-spacing:-0.752px;">Nagłówek</span>
<span class="a t" style="left:222.20px;top:120.00px;font-size:14px;line-height:16px;color:#5c5c5c;-webkit-text-stroke:0.25px;letter-spacing:-0.119px;">Dodatkowe</span>
<span class="a t" style="left:328.20px;top:120.00px;font-size:14px;line-height:16px;color:#5c5c5c;-webkit-text-stroke:0.25px;letter-spacing:-0.644px;">JPK VAT</span>
<span class="a t" style="left:44.00px;top:168.00px;font-size:14px;line-height:16px;color:#161616;-webkit-text-stroke:0.25px;letter-spacing:-0.076px;">Numer faktury</span>
<span class="a t" style="left:53.30px;top:200.00px;font-size:14px;line-height:16px;color:#161616;-webkit-text-stroke:0.25px;letter-spacing:-0.088px;">Data wpływu</span>
<span class="a t" style="left:24.20px;top:231.00px;font-size:14px;line-height:16px;color:#161616;-webkit-text-stroke:0.25px;letter-spacing:-0.157px;">Data wystawienia</span>
<span class="a t" style="left:55.20px;top:262.00px;font-size:14px;line-height:16px;color:#161616;-webkit-text-stroke:0.25px;letter-spacing:-0.202px;">Data zakupu</span>
<span class="a t" style="left:104.20px;top:323.00px;font-size:14px;line-height:16px;color:#161616;-webkit-text-stroke:0.25px;letter-spacing:-0.662px;">Opis</span>
<span class="a t" style="left:143.70px;top:168.00px;font-size:14px;line-height:16px;color:#161616;-webkit-text-stroke:0.25px;letter-spacing:-0.029px;">FZKO/1/2021/11</span>
<span class="a t" style="left:144.70px;top:200.00px;font-size:14px;line-height:16px;color:#161616;-webkit-text-stroke:0.25px;letter-spacing:-0.388px;">2021-11-28</span>
<span class="a t" style="left:144.70px;top:231.00px;font-size:14px;line-height:16px;color:#161616;-webkit-text-stroke:0.25px;letter-spacing:-0.388px;">2021-11-28</span>
<span class="a t" style="left:144.70px;top:262.00px;font-size:14px;line-height:16px;color:#161616;-webkit-text-stroke:0.25px;letter-spacing:-0.388px;">2021-11-28</span>
<span class="a t" style="left:469.70px;top:168.00px;font-size:14px;line-height:16px;color:#161616;-webkit-text-stroke:0.25px;letter-spacing:-0.298px;">Sz. moment VAT</span>
<span class="a t" style="left:514.20px;top:200.00px;font-size:14px;line-height:16px;color:#161616;-webkit-text-stroke:0.25px;letter-spacing:-0.466px;">Data VAT</span>
<span class="a t" style="left:489.70px;top:231.00px;font-size:14px;line-height:16px;color:#161616;-webkit-text-stroke:0.25px;letter-spacing:-0.142px;">Data dowodu</span>
<span class="a t" style="left:437.70px;top:262.00px;font-size:14px;line-height:16px;color:#161616;-webkit-text-stroke:0.25px;letter-spacing:-0.228px;">Schemat księgowania</span>
<span class="a t" style="left:476.70px;top:293.00px;font-size:14px;line-height:16px;color:#161616;-webkit-text-stroke:0.25px;letter-spacing:-0.077px;">Numer dowodu</span>
<span class="a t" style="left:584.70px;top:200.00px;font-size:14px;line-height:16px;color:#161616;-webkit-text-stroke:0.25px;letter-spacing:-0.332px;">2021-11-28</span>
<span class="a t" style="left:584.70px;top:231.00px;font-size:14px;line-height:16px;color:#161616;-webkit-text-stroke:0.25px;letter-spacing:-0.332px;">2021-11-28</span>
<span class="a t" style="left:584.70px;top:262.00px;font-size:14px;line-height:16px;color:#161616;-webkit-text-stroke:0.25px;letter-spacing:-1.016px;">ZAK_KRAJK_FK</span>
<span class="a t" style="left:864.10px;top:168.00px;font-size:14px;line-height:16px;color:#161616;-webkit-text-stroke:0.25px;letter-spacing:-0.148px;">Rodzaj płatności</span>
<span class="a t" style="left:877.50px;top:200.00px;font-size:14px;line-height:16px;color:#161616;-webkit-text-stroke:0.25px;letter-spacing:-0.124px;">Data płatności</span>
<span class="a t" style="left:840.30px;top:231.00px;font-size:14px;line-height:16px;color:#161616;-webkit-text-stroke:0.25px;letter-spacing:-0.062px;">Podzielona płatność</span>
<span class="a t" style="left:976.70px;top:168.00px;font-size:14px;line-height:16px;color:#161616;-webkit-text-stroke:0.25px;letter-spacing:-0.662px;">P30</span>
<span class="a t" style="left:977.70px;top:200.00px;font-size:14px;line-height:16px;color:#161616;-webkit-text-stroke:0.25px;letter-spacing:-0.392px;">2021-12-28</span>
<span class="a t" style="left:995.70px;top:230.00px;font-size:14px;line-height:16px;color:#161616;-webkit-text-stroke:0.25px;letter-spacing:-0.357px;">Obowiązkowa</span>
<span class="a t" style="left:995.20px;top:262.00px;font-size:14px;line-height:16px;color:#161616;-webkit-text-stroke:0.25px;letter-spacing:-0.199px;">Przelew split payment</span>
<span class="a t" style="left:18.20px;top:390.00px;font-size:14px;line-height:16px;color:#161616;font-weight:700;letter-spacing:-0.652px;">Linijki dokumentu</span>
<span class="a t" style="left:163.20px;top:390.00px;font-size:14px;line-height:16px;color:#5c5c5c;-webkit-text-stroke:0.25px;letter-spacing:-0.066px;">Terminarz płatności</span>
<span class="a t" style="left:319.20px;top:390.00px;font-size:14px;line-height:16px;color:#5c5c5c;-webkit-text-stroke:0.25px;letter-spacing:-0.028px;">Linijki dowodu</span>
<span class="a t" style="left:36.20px;top:427.00px;font-size:14px;line-height:16px;color:#161616;-webkit-text-stroke:0.25px;letter-spacing:-0.402px;">Nowy</span>
<span class="a t" style="left:128.70px;top:427.00px;font-size:14px;line-height:16px;color:#161616;-webkit-text-stroke:0.25px;letter-spacing:-0.587px;">Edycja</span>
<span class="a t" style="left:244.20px;top:427.00px;font-size:14px;line-height:16px;color:#161616;-webkit-text-stroke:0.25px;letter-spacing:-0.126px;">Procedury</span>
<span class="a t" style="left:40.70px;top:461.00px;font-size:14px;line-height:16px;color:#161616;-webkit-text-stroke:0.25px;letter-spacing:-1.149px;">VAT</span>
<span class="a t" style="left:252.70px;top:461.00px;font-size:14px;line-height:16px;color:#161616;-webkit-text-stroke:0.25px;letter-spacing:-0.365px;">Stawka</span>
<span class="a t" style="left:327.20px;top:461.00px;font-size:14px;line-height:16px;color:#161616;-webkit-text-stroke:0.25px;letter-spacing:-0.206px;">Kwoty</span>
<span class="a t" style="left:608.70px;top:461.00px;font-size:14px;line-height:16px;color:#161616;-webkit-text-stroke:0.25px;letter-spacing:-0.023px;">Kwoty walutowe</span>
<span class="a t" style="left:850.70px;top:461.00px;font-size:14px;line-height:16px;color:#161616;-webkit-text-stroke:0.25px;letter-spacing:-0.399px;">VAT</span>
<span class="a t" style="left:1095.70px;top:461.00px;font-size:14px;line-height:16px;color:#161616;-webkit-text-stroke:0.25px;letter-spacing:-0.249px;width:44.30px;overflow:hidden;">Ręcznie</span>
<span class="a t" style="left:40.70px;top:485.00px;font-size:14px;line-height:16px;color:#161616;-webkit-text-stroke:0.25px;letter-spacing:-0.365px;">Stawka</span>
<span class="a t" style="left:115.20px;top:485.00px;font-size:14px;line-height:16px;color:#161616;-webkit-text-stroke:0.25px;letter-spacing:-0.540px;width:65.80px;overflow:hidden;">Grupa klas.</span>
<span class="a t" style="left:202.20px;top:485.00px;font-size:14px;line-height:16px;color:#161616;-webkit-text-stroke:0.25px;letter-spacing:-1.200px;">GV</span>
<span class="a t" style="left:252.70px;top:485.00px;font-size:14px;line-height:16px;color:#161616;-webkit-text-stroke:0.25px;letter-spacing:-0.079px;width:68.30px;overflow:hidden;">dodatkowa</span>
<span class="a t" style="left:328.20px;top:485.00px;font-size:14px;line-height:16px;color:#161616;font-weight:700;letter-spacing:-0.730px;">Netto</span>
<span class="a t" style="left:403.20px;top:485.00px;font-size:14px;line-height:16px;color:#161616;-webkit-text-stroke:0.25px;letter-spacing:-1.200px;">VAT</span>
<span class="a t" style="left:495.70px;top:485.00px;font-size:14px;line-height:16px;color:#161616;-webkit-text-stroke:0.25px;letter-spacing:0.147px;">Brutto</span>
<span class="a t" style="left:608.70px;top:485.00px;font-size:14px;line-height:16px;color:#161616;-webkit-text-stroke:0.25px;letter-spacing:0.031px;">Netto</span>
<span class="a t" style="left:664.70px;top:485.00px;font-size:14px;line-height:16px;color:#161616;-webkit-text-stroke:0.25px;letter-spacing:-1.200px;">VAT</span>
<span class="a t" style="left:750.70px;top:485.00px;font-size:14px;line-height:16px;color:#161616;-webkit-text-stroke:0.25px;letter-spacing:0.147px;">Brutto</span>
<span class="a t" style="left:849.70px;top:485.00px;font-size:14px;line-height:16px;color:#161616;-webkit-text-stroke:0.25px;letter-spacing:-0.180px;">Data VAT</span>
<span class="a t" style="left:945.70px;top:485.00px;font-size:14px;line-height:16px;color:#161616;-webkit-text-stroke:0.25px;letter-spacing:-0.162px;">Kurs</span>
<span class="a t" style="left:996.70px;top:485.00px;font-size:14px;line-height:16px;color:#161616;-webkit-text-stroke:0.25px;letter-spacing:-1.200px;">SMV</span>
<span class="a t" style="left:102.50px;top:495.00px;font-size:10px;line-height:11px;color:#111;-webkit-text-stroke:0.25px;">2</span>
<span class="a t" style="left:190.50px;top:495.00px;font-size:10px;line-height:11px;color:#111;-webkit-text-stroke:0.25px;">3</span>
<span class="a t" style="left:240.00px;top:495.00px;font-size:10px;line-height:11px;color:#111;-webkit-text-stroke:0.25px;">4</span>
<span class="a t" style="left:315.50px;top:470.50px;font-size:10px;line-height:11px;color:#111;-webkit-text-stroke:0.25px;">5</span>
<span class="a t" style="left:44.90px;top:512.00px;font-size:14px;line-height:16px;color:#161616;-webkit-text-stroke:0.25px;letter-spacing:-1.200px;">23%</span>
<span class="a t" style="left:119.20px;top:512.00px;font-size:14px;line-height:16px;color:#161616;-webkit-text-stroke:0.25px;letter-spacing:-1.200px;">ZPOZ</span>
<span class="a t" style="left:205.20px;top:512.00px;font-size:14px;line-height:16px;color:#161616;-webkit-text-stroke:0.25px;">B</span>
<span class="a t" style="left:443.70px;top:512.00px;font-size:14px;line-height:16px;color:#161616;-webkit-text-stroke:0.25px;letter-spacing:-0.597px;">230,00</span>
<span class="a t" style="left:543.45px;top:512.00px;font-size:14px;line-height:16px;color:#161616;-webkit-text-stroke:0.25px;letter-spacing:-0.201px;">1 230,00</span>
<span class="a t" style="left:854.70px;top:512.00px;font-size:14px;line-height:16px;color:#161616;-webkit-text-stroke:0.25px;letter-spacing:-0.276px;">2021-11-28</span>
<span class="a t" style="left:975.00px;top:512.00px;font-size:14px;line-height:16px;color:#161616;-webkit-text-stroke:0.25px;">1</span>
<span class="a t" style="left:44.90px;top:539.00px;font-size:14px;line-height:16px;color:#161616;-webkit-text-stroke:0.25px;letter-spacing:-1.200px;">8%</span>
<span class="a t" style="left:119.20px;top:539.00px;font-size:14px;line-height:16px;color:#161616;-webkit-text-stroke:0.25px;letter-spacing:-1.200px;">ZPOZ</span>
<span class="a t" style="left:205.20px;top:539.00px;font-size:14px;line-height:16px;color:#161616;-webkit-text-stroke:0.25px;">B</span>
<span class="a t" style="left:365.70px;top:539.00px;font-size:14px;line-height:16px;color:#161616;-webkit-text-stroke:0.25px;letter-spacing:-0.887px;">0,00</span>
<span class="a t" style="left:458.95px;top:539.00px;font-size:14px;line-height:16px;color:#161616;-webkit-text-stroke:0.25px;letter-spacing:-0.887px;">0,00</span>
<span class="a t" style="left:571.95px;top:539.00px;font-size:14px;line-height:16px;color:#161616;-webkit-text-stroke:0.25px;letter-spacing:-0.887px;">0,00</span>
<span class="a t" style="left:854.70px;top:539.00px;font-size:14px;line-height:16px;color:#161616;-webkit-text-stroke:0.25px;letter-spacing:-0.276px;">2021-11-28</span>
<span class="a t" style="left:975.00px;top:539.00px;font-size:14px;line-height:16px;color:#161616;-webkit-text-stroke:0.25px;">1</span>
<span class="a t" style="left:44.90px;top:565.00px;font-size:14px;line-height:16px;color:#161616;-webkit-text-stroke:0.25px;letter-spacing:-1.200px;">5%</span>
<span class="a t" style="left:119.20px;top:565.00px;font-size:14px;line-height:16px;color:#161616;-webkit-text-stroke:0.25px;letter-spacing:-1.200px;">ZPOZ</span>
<span class="a t" style="left:205.20px;top:565.00px;font-size:14px;line-height:16px;color:#161616;-webkit-text-stroke:0.25px;">B</span>
<span class="a t" style="left:365.70px;top:565.00px;font-size:14px;line-height:16px;color:#161616;-webkit-text-stroke:0.25px;letter-spacing:-0.887px;">0,00</span>
<span class="a t" style="left:458.95px;top:565.00px;font-size:14px;line-height:16px;color:#161616;-webkit-text-stroke:0.25px;letter-spacing:-0.887px;">0,00</span>
<span class="a t" style="left:571.95px;top:565.00px;font-size:14px;line-height:16px;color:#161616;-webkit-text-stroke:0.25px;letter-spacing:-0.887px;">0,00</span>
<span class="a t" style="left:854.70px;top:565.00px;font-size:14px;line-height:16px;color:#161616;-webkit-text-stroke:0.25px;letter-spacing:-0.276px;">2021-11-28</span>
<span class="a t" style="left:975.00px;top:565.00px;font-size:14px;line-height:16px;color:#161616;-webkit-text-stroke:0.25px;">1</span>
<span class="a t" style="left:44.90px;top:591.00px;font-size:14px;line-height:16px;color:#161616;-webkit-text-stroke:0.25px;letter-spacing:-1.200px;">4%</span>
<span class="a t" style="left:119.20px;top:591.00px;font-size:14px;line-height:16px;color:#161616;-webkit-text-stroke:0.25px;letter-spacing:-1.200px;">ZPOZ</span>
<span class="a t" style="left:205.20px;top:591.00px;font-size:14px;line-height:16px;color:#161616;-webkit-text-stroke:0.25px;">B</span>
<span class="a t" style="left:365.70px;top:591.00px;font-size:14px;line-height:16px;color:#161616;-webkit-text-stroke:0.25px;letter-spacing:-0.887px;">0,00</span>
<span class="a t" style="left:458.95px;top:591.00px;font-size:14px;line-height:16px;color:#161616;-webkit-text-stroke:0.25px;letter-spacing:-0.887px;">0,00</span>
<span class="a t" style="left:571.95px;top:591.00px;font-size:14px;line-height:16px;color:#161616;-webkit-text-stroke:0.25px;letter-spacing:-0.887px;">0,00</span>
<span class="a t" style="left:854.70px;top:591.00px;font-size:14px;line-height:16px;color:#161616;-webkit-text-stroke:0.25px;letter-spacing:-0.276px;">2021-11-28</span>
<span class="a t" style="left:975.00px;top:591.00px;font-size:14px;line-height:16px;color:#161616;-webkit-text-stroke:0.25px;">1</span>
<span class="a t" style="left:44.90px;top:617.00px;font-size:14px;line-height:16px;color:#161616;-webkit-text-stroke:0.25px;letter-spacing:-1.200px;">0%</span>
<span class="a t" style="left:119.20px;top:617.00px;font-size:14px;line-height:16px;color:#161616;-webkit-text-stroke:0.25px;letter-spacing:-1.200px;">ZPOZ</span>
<span class="a t" style="left:205.20px;top:617.00px;font-size:14px;line-height:16px;color:#161616;-webkit-text-stroke:0.25px;">B</span>
<span class="a t" style="left:365.70px;top:617.00px;font-size:14px;line-height:16px;color:#161616;-webkit-text-stroke:0.25px;letter-spacing:-0.887px;">0,00</span>
<span class="a t" style="left:458.95px;top:617.00px;font-size:14px;line-height:16px;color:#161616;-webkit-text-stroke:0.25px;letter-spacing:-0.887px;">0,00</span>
<span class="a t" style="left:571.95px;top:617.00px;font-size:14px;line-height:16px;color:#161616;-webkit-text-stroke:0.25px;letter-spacing:-0.887px;">0,00</span>
<span class="a t" style="left:854.70px;top:617.00px;font-size:14px;line-height:16px;color:#161616;-webkit-text-stroke:0.25px;letter-spacing:-0.276px;">2021-11-28</span>
<span class="a t" style="left:975.00px;top:617.00px;font-size:14px;line-height:16px;color:#161616;-webkit-text-stroke:0.25px;">1</span>
<span class="a t" style="left:43.90px;top:644.00px;font-size:14px;line-height:16px;color:#161616;-webkit-text-stroke:0.25px;letter-spacing:-0.524px;">NPN</span>
<span class="a t" style="left:118.20px;top:644.00px;font-size:14px;line-height:16px;color:#161616;-webkit-text-stroke:0.25px;letter-spacing:-0.703px;">NVAT</span>
<span class="a t" style="left:205.20px;top:644.00px;font-size:14px;line-height:16px;color:#161616;-webkit-text-stroke:0.25px;">N</span>
<span class="a t" style="left:365.70px;top:644.00px;font-size:14px;line-height:16px;color:#161616;-webkit-text-stroke:0.25px;letter-spacing:-0.887px;">0,00</span>
<span class="a t" style="left:458.95px;top:644.00px;font-size:14px;line-height:16px;color:#161616;-webkit-text-stroke:0.25px;letter-spacing:-0.887px;">0,00</span>
<span class="a t" style="left:571.95px;top:644.00px;font-size:14px;line-height:16px;color:#161616;-webkit-text-stroke:0.25px;letter-spacing:-0.887px;">0,00</span>
<span class="a t" style="left:854.70px;top:644.00px;font-size:14px;line-height:16px;color:#161616;-webkit-text-stroke:0.25px;letter-spacing:-0.276px;">2021-11-28</span>
<span class="a t" style="left:975.00px;top:644.00px;font-size:14px;line-height:16px;color:#161616;-webkit-text-stroke:0.25px;">1</span>
<span class="a t" style="left:43.90px;top:670.00px;font-size:14px;line-height:16px;color:#161616;-webkit-text-stroke:0.25px;letter-spacing:-1.200px;">NPO</span>
<span class="a t" style="left:119.20px;top:670.00px;font-size:14px;line-height:16px;color:#161616;-webkit-text-stroke:0.25px;letter-spacing:-1.200px;">ZPOZ</span>
<span class="a t" style="left:205.20px;top:670.00px;font-size:14px;line-height:16px;color:#161616;-webkit-text-stroke:0.25px;">B</span>
<span class="a t" style="left:365.70px;top:670.00px;font-size:14px;line-height:16px;color:#161616;-webkit-text-stroke:0.25px;letter-spacing:-0.887px;">0,00</span>
<span class="a t" style="left:458.95px;top:670.00px;font-size:14px;line-height:16px;color:#161616;-webkit-text-stroke:0.25px;letter-spacing:-0.887px;">0,00</span>
<span class="a t" style="left:571.95px;top:670.00px;font-size:14px;line-height:16px;color:#161616;-webkit-text-stroke:0.25px;letter-spacing:-0.887px;">0,00</span>
<span class="a t" style="left:854.70px;top:670.00px;font-size:14px;line-height:16px;color:#161616;-webkit-text-stroke:0.25px;letter-spacing:-0.276px;">2021-11-28</span>
<span class="a t" style="left:975.00px;top:670.00px;font-size:14px;line-height:16px;color:#161616;-webkit-text-stroke:0.25px;">1</span>
<span class="a t" style="left:44.90px;top:696.00px;font-size:14px;line-height:16px;color:#161616;-webkit-text-stroke:0.25px;letter-spacing:-1.200px;">ZW</span>
<span class="a t" style="left:119.20px;top:696.00px;font-size:14px;line-height:16px;color:#161616;-webkit-text-stroke:0.25px;letter-spacing:-1.200px;">ZPOZ</span>
<span class="a t" style="left:206.20px;top:696.00px;font-size:14px;line-height:16px;color:#161616;-webkit-text-stroke:0.25px;">Z</span>
<span class="a t" style="left:365.70px;top:696.00px;font-size:14px;line-height:16px;color:#161616;-webkit-text-stroke:0.25px;letter-spacing:-0.887px;">0,00</span>
<span class="a t" style="left:458.95px;top:696.00px;font-size:14px;line-height:16px;color:#161616;-webkit-text-stroke:0.25px;letter-spacing:-0.887px;">0,00</span>
<span class="a t" style="left:571.95px;top:696.00px;font-size:14px;line-height:16px;color:#161616;-webkit-text-stroke:0.25px;letter-spacing:-0.887px;">0,00</span>
<span class="a t" style="left:854.70px;top:696.00px;font-size:14px;line-height:16px;color:#161616;-webkit-text-stroke:0.25px;letter-spacing:-0.276px;">2021-11-28</span>
<span class="a t" style="left:975.00px;top:696.00px;font-size:14px;line-height:16px;color:#161616;-webkit-text-stroke:0.25px;">1</span>
<span class="a t" style="left:338.70px;top:512.00px;font-size:14px;line-height:16px;color:#161616;-webkit-text-stroke:0.25px;letter-spacing:-0.416px;">1 000,00</span>
<span class="a t" style="left:55.70px;top:827.00px;font-size:14px;line-height:16px;color:#161616;font-weight:700;letter-spacing:-0.670px;">Dodatkowe dane dla JPK</span>
<span class="a t" style="left:243.70px;top:827.00px;font-size:14px;line-height:16px;color:#5c5c5c;-webkit-text-stroke:0.25px;letter-spacing:-0.268px;">Sumy w grupach odliczeń VAT</span>
<span class="a t" style="left:462.20px;top:827.00px;font-size:14px;line-height:16px;color:#5c5c5c;-webkit-text-stroke:0.25px;letter-spacing:-0.187px;">Kwoty w stawkach VAT</span>
<span class="a t" style="left:639.70px;top:827.00px;font-size:14px;line-height:16px;color:#5c5c5c;-webkit-text-stroke:0.25px;letter-spacing:-0.251px;">Zaliczki</span>
<span class="a t" style="left:721.70px;top:827.00px;font-size:14px;line-height:16px;color:#5c5c5c;-webkit-text-stroke:0.25px;letter-spacing:-0.175px;">Wymiary kontrolingowe</span>
<span class="a t" style="left:900.20px;top:827.00px;font-size:14px;line-height:16px;color:#5c5c5c;-webkit-text-stroke:0.25px;letter-spacing:-0.288px;">Sumy walutowe</span>
</div>
</div></body></html>
